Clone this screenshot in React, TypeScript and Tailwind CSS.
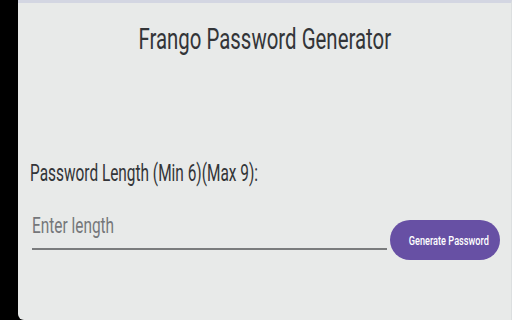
export default function App() {
  return (
    <div className="w-[512px] h-[320px] bg-black flex pl-[18px] overflow-hidden" style={{ fontFamily: 'Roboto, "Liberation Sans", sans-serif' }}>
      <div className="flex-1 flex flex-col bg-[#e8eae9] border-t-[3px] border-r border-t-[#d3d6e2] border-r-[#dcdfe0] rounded-bl-md">
        <h1 className="mt-[18px] text-center text-[30px] leading-[36px] text-[#333538] whitespace-nowrap">
          <span className="inline-block scale-x-[0.68]">Frango Password Generator</span>
        </h1>
        <p className="mt-[103px] pl-[12px] text-[23px] leading-[28px] text-[#333538] whitespace-nowrap">
          <span className="inline-block origin-left scale-x-[0.67]">Password Length (Min 6)(Max 9):</span>
        </p>
        <div className="mt-[25px] pl-[14px] pr-[11px] flex items-end gap-[3px]">
          <div className="flex-1 mb-[10px] h-[37px] border-b-2 border-[#7a7c7d] text-[22px] leading-[26px] text-[#75777a] whitespace-nowrap">
            <span className="inline-block origin-left scale-x-[0.70]">Enter length</span>
          </div>
          <button className="w-[110px] h-[40px] rounded-full bg-[#6750a4] text-white text-[13.5px] font-medium whitespace-nowrap">
            <span className="inline-block scale-x-[0.68]">Generate Password</span>
          </button>
        </div>
      </div>
    </div>
  );
}
